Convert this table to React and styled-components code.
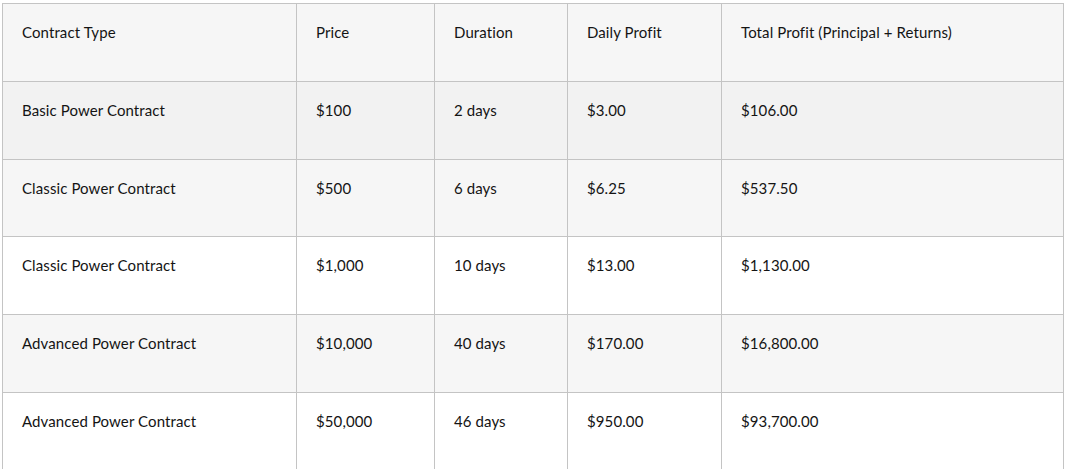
import React from "react";
import styled, { createGlobalStyle } from "styled-components";

const Global = createGlobalStyle`
  html, body { margin: 0; padding: 0; background: #ffffff; }
  body { font-family: "Lato", "Open Sans", sans-serif; color: #141414; }
`;

const Page = styled.div`
  padding: 3px 0 0 2px;
`;

const Table = styled.table`
  border-collapse: collapse;
  table-layout: fixed;
  width: 1061px;
  font-size: 15px;
`;

const Row = styled.tr`
  height: 77.8px;
  background: ${(p) => p.$bg};
`;

const Cell = styled.td`
  border: 1px solid #c4c4c4;
  padding: 18px 19px 0;
  vertical-align: top;
  line-height: 20px;
  font-weight: 400;
  letter-spacing: 0.1px;
  text-align: left;
  white-space: nowrap;
`;

const HeadCell = styled(Cell).attrs({ as: "th" })``;

const widths = [294, 138, 133, 154, 342];
const headers = ["Contract Type", "Price", "Duration", "Daily Profit", "Total Profit (Principal + Returns)"];
const rows = [
  { bg: "#f2f2f2", cells: ["Basic Power Contract", "$100", "2 days", "$3.00", "$106.00"] },
  { bg: "#f6f6f6", cells: ["Classic Power Contract", "$500", "6 days", "$6.25", "$537.50"] },
  { bg: "#ffffff", cells: ["Classic Power Contract", "$1,000", "10 days", "$13.00", "$1,130.00"] },
  { bg: "#f6f6f6", cells: ["Advanced Power Contract", "$10,000", "40 days", "$170.00", "$16,800.00"] },
  { bg: "#ffffff", cells: ["Advanced Power Contract", "$50,000", "46 days", "$950.00", "$93,700.00"] },
];

export default function App() {
  return (
    <Page>
      <Global />
      <Table>
        <colgroup>
          {widths.map((w, i) => (
            <col key={i} style={{ width: w }} />
          ))}
        </colgroup>
        <thead>
          <Row $bg="#f6f6f6">
            {headers.map((h) => (
              <HeadCell key={h}>{h}</HeadCell>
            ))}
          </Row>
        </thead>
        <tbody>
          {rows.map((r, i) => (
            <Row key={i} $bg={r.bg}>
              {r.cells.map((c, j) => (
                <Cell key={j}>{c}</Cell>
              ))}
            </Row>
          ))}
        </tbody>
      </Table>
    </Page>
  );
}
